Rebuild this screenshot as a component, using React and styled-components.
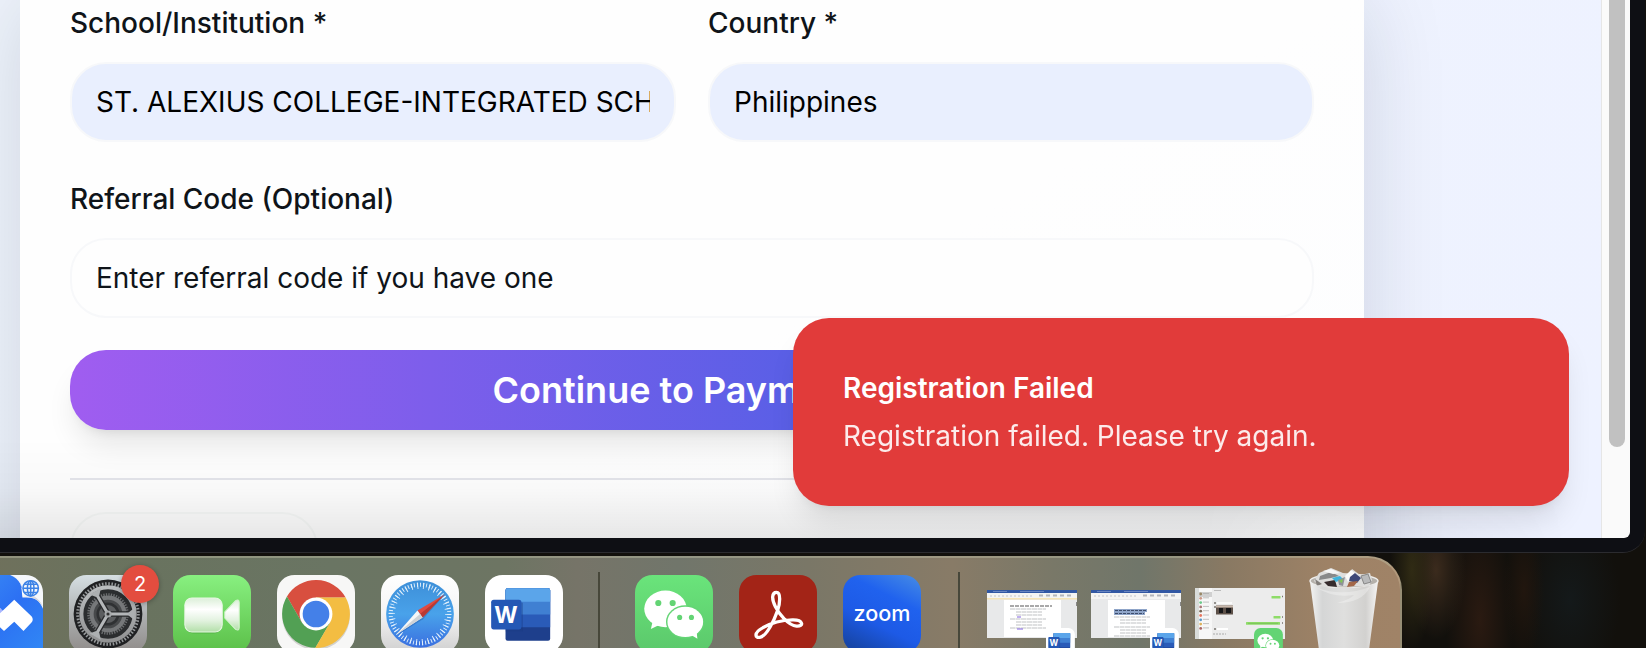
import React from 'react';
import styled, { createGlobalStyle } from 'styled-components';
import { ArrowRight } from 'lucide-react';

const GlobalStyle = createGlobalStyle`
  *, *::before, *::after { box-sizing: border-box; }
  body { margin: 0; font-family: Inter, "Liberation Sans", sans-serif; color: #0f1419; }
  button, input { font: inherit; color: inherit; }
`;

const Desktop = styled.div`
  display: flex;
  flex-direction: column;
  gap: 3px;
  height: 100vh;
  overflow: hidden;
  background:
    radial-gradient(ellipse 22px 80px at 1412px 570px, #302b14 0%, transparent 100%),
    radial-gradient(ellipse 30px 70px at 1436px 570px, #3b2b1d 0%, transparent 100%),
    radial-gradient(ellipse 34px 110px at 1480px 620px, #2a1a11 0%, transparent 100%),
    radial-gradient(ellipse 20px 70px at 1524px 590px, #21160e 0%, transparent 100%),
    radial-gradient(ellipse 50px 90px at 1570px 600px, #14191a 0%, transparent 100%),
    #12100c;
`;

const Window = styled.div`
  flex: 1;
  min-height: 0;
  margin-right: 1px;
  padding: 0 15px 14px 0;
  background: #0e0f14;
  border-bottom: 1px solid #2b2b2f;
  border-radius: 0 0 22px 0;
`;

const Viewport = styled.div`
  display: flex;
  height: 100%;
  overflow: hidden;
  background: #fafafa;
  border-radius: 0 0 6px 0;
`;

const Page = styled.main`
  position: relative;
  flex: 1;
  min-width: 0;
  overflow: hidden;
  background: linear-gradient(100deg, #eff4fc, #eef2ff);
`;

const ScrollTrack = styled.div`
  width: 29px;
  padding-left: 7px;
  border-left: 1px solid #e6e6e6;
`;

const ScrollThumb = styled.div`
  width: 16px;
  height: 83%;
  background: #c1c1c1;
  border-radius: 0 0 8px 8px;
`;

const Card = styled.form`
  display: flex;
  flex-direction: column;
  margin: 0 237px 0 20px;
  padding: 2px 50px 160px;
  background: linear-gradient(150deg, #fefefe 50%, #fcfdff);
  box-shadow: 0 0 80px rgba(10, 25, 50, 0.14);
`;

const FieldRow = styled.div`
  display: grid;
  grid-template-columns: 1fr 1fr;
  gap: 32px;
  margin-bottom: 36px;
`;

const Field = styled.div`
  display: flex;
  flex-direction: column;
  gap: 18px;
  min-width: 0;
`;

const Label = styled.label`
  font-size: 28px;
  font-weight: 500;
  line-height: 42px;
`;

const TextInput = styled.input`
  width: 100%;
  height: 80px;
  padding: 0 24px;
  border: 2px solid #f7f8fa;
  border-radius: 36px;
  background: ${(p) => (p.$filled ? '#e9effe' : '#fefefe')};
  color: ${(p) => (p.$filled ? '#000' : '#0f1419')};
  font-size: 28px;
  outline: none;
  &::placeholder { color: #0f1419; opacity: 1; }
`;

const SubmitButton = styled.button`
  display: flex;
  align-items: center;
  justify-content: center;
  gap: 8px;
  height: 80px;
  margin-top: 32px;
  border: 0;
  border-radius: 36px;
  background: linear-gradient(90deg, #a05df0, #5a5fe6 58%, #2563eb);
  color: #fff;
  font-size: 36px;
  font-weight: 600;
  box-shadow: 0 20px 30px -6px rgba(0, 0, 0, 0.1), 0 8px 12px -8px rgba(0, 0, 0, 0.1);
`;

const Separator = styled.hr`
  width: 100%;
  height: 2px;
  margin: 48px 0 32px;
  border: 0;
  background: #e4e5eb;
`;

const OutlineButton = styled.button`
  width: 248px;
  height: 80px;
  border: 2px solid #f7f9f8;
  border-radius: 36px;
  background: transparent;
`;

const BottomShade = styled.div`
  position: absolute;
  inset: auto 0 0 0;
  height: 100px;
  background: linear-gradient(transparent, rgba(0, 0, 0, 0.02) 50%, rgba(0, 0, 0, 0.09));
  mask-image: linear-gradient(90deg, #000 75%, transparent 98%);
  pointer-events: none;
`;

const Toast = styled.section`
  position: absolute;
  right: 32px;
  bottom: 32px;
  display: flex;
  flex-direction: column;
  gap: 8px;
  width: 776px;
  padding: 50px;
  border-radius: 36px;
  background: #e13b3a;
  color: #fff;
  box-shadow: 0 20px 30px -6px rgba(0, 0, 0, 0.1), 0 8px 12px -8px rgba(0, 0, 0, 0.1);
`;

const ToastTitle = styled.h2`
  margin: 0;
  font-size: 28px;
  font-weight: 600;
  line-height: 40px;
`;

const ToastText = styled.p`
  margin: 0;
  font-size: 28px;
  line-height: 40px;
  opacity: 0.9;
`;

const Dock = styled.nav`
  display: flex;
  align-self: flex-start;
  flex: none;
  height: 92px;
  margin-left: -44px;
  padding: 10px 21px 0 9px;
  border-top: 2px solid rgba(190, 190, 165, 0.45);
  border-right: 2px solid rgba(200, 180, 150, 0.45);
  border-radius: 0 34px 0 0;
  background: linear-gradient(90deg, #70705b 0, #69735f 13%, #6a7563 26%, #6d7563 38%, #767468 43%, #71766b 50%, #7a7767 59%, #887b67 69%, #797868 76%, #70766a 82%, #897963 88%, #9e8266 95%, #a08367);
`;

const AppGroup = styled.div`
  display: flex;
  gap: 26px;
  padding-top: 7px;
`;

const ThumbGroup = styled.div`
  display: flex;
  gap: 14px;
  padding-top: 20px;
  margin-right: 24px;
`;

const DockDivider = styled.div`
  width: 2px;
  margin: ${(p) => (p.$beforeWindows ? '4px 27px 0 37px' : '4px 35px 0')};
  background: #47473a;
`;

const DockItem = styled.button`
  position: relative;
  display: block;
  height: max-content;
  padding: 0;
  border: 0;
  background: none;
  svg { display: block; }
`;

const Badge = styled.span`
  position: absolute;
  top: -10px;
  right: -12px;
  width: 38px;
  height: 38px;
  border-radius: 50%;
  background: #e34d3f;
  color: #fff;
  font-size: 20px;
  line-height: 38px;
  text-align: center;
  box-shadow: 0 1px 5px rgba(0, 0, 0, 0.3);
`;

function Tile({ fill, children }) {
  return (
    <svg width="78" height="78" viewBox="0 0 76 76" aria-hidden="true">
      <rect width="76" height="76" rx="17" fill={fill} />
      {children}
    </svg>
  );
}

function Gradient({ id, stops, x2 = 0, y2 = 1 }) {
  return (
    <linearGradient id={id} x1="0" y1="0" x2={x2} y2={y2}>
      {stops.map((c, i) => (
        <stop key={i} offset={i / (stops.length - 1)} stopColor={c} />
      ))}
    </linearGradient>
  );
}

function MeetingIcon() {
  return (
    <Tile fill="#f5f7fb">
      <defs>
        <Gradient id="meet" stops={['#3b8df5', '#2c70f3', '#3188f5']} x2={1} />
        <Gradient id="fold" stops={['#b9bcc8', '#ffffff', '#c9ccd8']} x2={1} y2={0.6} />
      </defs>
      <path d="M17 0H44C54 4 56 12 58 21C67 21 73 25 76 33V76H0V17Q0 0 17 0Z" fill="url(#meet)" />
      <path d="M44 0C56 3 55 14 56 22C66 21 72 24 76 31C72 20 58 17 55 12C54 6 51 2 44 0Z" fill="url(#fold)" />
      <g fill="none" stroke="#3c82e6" strokeWidth="1.5">
        <circle cx="64" cy="13" r="7.5" />
        <ellipse cx="64" cy="13" rx="3.2" ry="7.5" />
        <path d="M64 5.500V20.500M56.500 13H71.500M58 9H70M58 17H70" />
      </g>
      <path d="M30 27L38 36L34 40Z" fill="#a7b5ff" />
      <path d="M48 24L65 40.500Q67 43.500 65 46L57 54.500L48 45.500L38 54.500L29 46V42Z" fill="#fff" />
    </Tile>
  );
}

function SettingsIcon() {
  return (
    <Tile fill="url(#set)">
      <defs>
        <Gradient id="set" stops={['#d6dfe3', '#aeb1b2', '#8f8b89']} />
        <Gradient id="gear" stops={['#b9bcbe', '#929394']} />
      </defs>
      <circle cx="38" cy="38" r="33.500" fill="#1f2022" />
      <circle cx="38" cy="38" r="29.500" fill="none" stroke="#96999b" strokeWidth="3" strokeDasharray="1.500 1.590" />
      <circle cx="38" cy="38" r="26" fill="#2b2d2f" stroke="url(#gear)" strokeWidth="4" />
      <circle cx="38" cy="38" r="19" fill="none" stroke="#6c6e70" strokeWidth="2.500" strokeDasharray="1.300 1.180" />
      <circle cx="38" cy="38" r="16" fill="#47494b" stroke="#76787a" strokeWidth="4" />
      <circle cx="38" cy="38" r="10" fill="#5b5d5f" stroke="#2f3133" strokeWidth="2.500" />
      <path d="M38 38H63M38 38L25.500 16.500M38 38L25.500 59.500" stroke="#2a2b2d" strokeWidth="5.500" />
      <path d="M38 38H63M38 38L25.500 16.500M38 38L25.500 59.500" stroke="#b4b7b9" strokeWidth="3" />
      <path d="M58 36.500L64 32V44L58 39.500ZM29.500 20L31 13L20 19L26.500 21.500ZM29.500 56L31 63L20 57L26.500 54.500Z" fill="#acafb1" />
      <circle cx="38" cy="38" r="3.500" fill="#a5a8aa" />
      <circle cx="38" cy="38" r="1.500" fill="#333" />
    </Tile>
  );
}

function VideoIcon() {
  return (
    <Tile fill="url(#ft)">
      <defs>
        <Gradient id="ft" stops={['#88f080', '#5bbf48']} />
        <Gradient id="cam" stops={['#dcefd9', '#ffffff', '#e2f2df', '#b3dfa9']} />
      </defs>
      <rect x="11" y="23" width="37.500" height="34" rx="9" fill="#3c9b30" opacity="0.45" />
      <rect x="11.500" y="22.500" width="36.500" height="33" rx="7" fill="url(#cam)" stroke="#e8f8e4" />
      <path d="M50.500 36L61 25Q64.500 23 64.500 27V51Q64.500 55 61 53L50.500 42Z" fill="url(#cam)" stroke="#d6f4d0" />
    </Tile>
  );
}

function ChromeIcon() {
  return (
    <Tile fill="#f7f7f6">
      <circle cx="38" cy="40" r="33" fill="#b9b9b5" opacity="0.6" />
      <path d="M9.700 21A33 33 0 0 1 66.900 22H38V38L24.100 46Z" fill="#d84f3f" />
      <path d="M9.700 21A33 33 0 0 0 37.400 71L51.900 46L38 38L24.100 46Z" fill="#52a054" />
      <path d="M66.900 22A33 33 0 0 1 37.400 71L51.900 46L38 38V22Z" fill="#f3bd42" />
      <circle cx="38" cy="38" r="16" fill="#fff" />
      <circle cx="38" cy="38" r="13" fill="#4480e8" />
    </Tile>
  );
}

function SafariIcon() {
  return (
    <Tile fill="url(#sfbg)">
      <defs>
        <Gradient id="sfbg" stops={['#ffffff', '#f4f4f4', '#cfcfcf']} />
        <Gradient id="sf" stops={['#3d8fd8', '#49a2ea', '#3a6fe0']} />
      </defs>
      <circle cx="38" cy="38" r="33" fill="url(#sf)" />
      <circle cx="38" cy="38" r="28.500" fill="none" stroke="#e4f1fc" strokeWidth="4" strokeDasharray="0.900 2.080" />
      <circle cx="38" cy="38" r="27.500" fill="none" stroke="#e4f1fc" strokeWidth="6" strokeDasharray="0.900 4.860" />
      <path d="M62 19L41 43L15 59Z" fill="#1f4f9c" opacity="0.35" />
      <path d="M62 19L35.500 34.500L40.500 41.500Z" fill="#df4b41" />
      <path d="M62 19L38 38L40.500 41.500Z" fill="#b83a34" />
      <path d="M15 58L35.500 34.500L40.500 41.500Z" fill="#f7f7f7" />
      <path d="M15 58L38 38L40.500 41.500Z" fill="#cfd2d6" />
    </Tile>
  );
}

function WordMark() {
  return (
    <>
      <rect x="20" y="13" width="43.500" height="51" rx="2" fill="#1e3f8c" />
      <path d="M20 51V15Q20 13 22 13H61.500Q63.500 13 63.500 15V51Z" fill="#2a5bb8" />
      <path d="M20 38.500V15Q20 13 22 13H61.500Q63.500 13 63.500 15V38.500Z" fill="#4080d2" />
      <path d="M20 26V15Q20 13 22 13H61.500Q63.500 13 63.500 15V26Z" fill="#5ba5ea" />
      <rect x="20" y="27" width="17" height="28" fill="#1b3a80" opacity="0.35" />
      <rect x="6" y="24" width="29.500" height="29" rx="2.500" fill="#2458b5" />
      <text x="20.500" y="46.500" fontSize="22" fontWeight="700" textAnchor="middle" fill="#fff">W</text>
    </>
  );
}

function WordIcon() {
  return (
    <Tile fill="#fff">
      <WordMark />
    </Tile>
  );
}

function ChatMark() {
  return (
    <>
      <ellipse cx="29.700" cy="33" rx="20.700" ry="17.800" fill="#fff" />
      <path d="M17 46L15.500 52.500L24 48.500Z" fill="#fff" />
      <circle cx="22.700" cy="27.300" r="3" fill="#63d474" />
      <circle cx="36.700" cy="27.300" r="3" fill="#63d474" />
      <ellipse cx="49" cy="45.700" rx="18.800" ry="16.200" fill="#63d474" />
      <ellipse cx="49" cy="45.700" rx="17.400" ry="14.800" fill="#fff" />
      <path d="M54 58L60.800 62.200L60 55Z" fill="#fff" />
      <circle cx="43.500" cy="41.300" r="2.500" fill="#63d474" />
      <circle cx="55" cy="41.300" r="2.500" fill="#63d474" />
    </>
  );
}

function ChatIcon() {
  return (
    <Tile fill="url(#wc)">
      <defs>
        <Gradient id="wc" stops={['#6ae47b', '#5bc86b']} />
      </defs>
      <ChatMark />
    </Tile>
  );
}

function AcrobatIcon() {
  return (
    <Tile fill="#a32417">
      <path
        d="M36.500 17C41 17 40 28 37.500 35C34 45 27 59 21 60.500C15 62 14.500 56 23 51.500C31 47 43 44 52 43.800C63 43.500 63.500 50.500 56 49.800C48 49 39 38 35.500 31C31.500 23 32 17 36.500 17Z"
        fill="none"
        stroke="#fff"
        strokeWidth="3.200"
      />
    </Tile>
  );
}

function ZoomIcon() {
  return (
    <Tile fill="url(#zm)">
      <defs>
        <linearGradient id="zm" x1="0.800" y1="0" x2="0.300" y2="1">
          <stop offset="0" stopColor="#3f84e6" />
          <stop offset="0.300" stopColor="#2062ee" />
          <stop offset="0.650" stopColor="#1d5ae6" />
          <stop offset="1" stopColor="#1746a8" />
        </linearGradient>
      </defs>
      <text x="38" y="45" fontSize="21" fontWeight="500" textAnchor="middle" fill="#fff">zoom</text>
    </Tile>
  );
}

function DocumentThumb({ highlighted }) {
  const rows = [23, 26, 29, 33, 36, 39, 42];
  return (
    <svg width="90" height="60" viewBox="0 0 90 60" aria-hidden="true">
      <rect y="2" width="90" height="48" fill="#e8e9ea" />
      <rect y="2" width="90" height="3.500" fill="#3258a3" />
      <path d="M6 3.500H20M33 3.500H57" stroke="#7f98cb" strokeWidth="0.700" />
      <rect y="5" width="90" height="6" fill="#f4f4f3" />
      <path d="M3 8H46" stroke="#c4c6ca" strokeWidth="1.200" strokeDasharray="2 2" />
      <path d="M52 7.500H84" stroke="#b4b6bb" strokeWidth="2" strokeDasharray="4 3" />
      {!highlighted && <rect y="10" width="90" height="1.500" fill="#f6e4b5" />}
      <rect x="17" y="12" width="57" height="37" fill="#fff" />
      {highlighted ? (
        <>
          <path d="M23 22.500H56M23 25.500H54" stroke="#8fa5c9" strokeWidth="3" />
          <path d="M24 22.500H55M24 25.500H53" stroke="#3d4d6c" strokeDasharray="3 1" />
        </>
      ) : (
        <path d="M23 18H65" stroke="#555" strokeWidth="1.200" strokeDasharray="4 1" />
      )}
      {rows.map((y, i) => (
        <path
          key={y}
          d={`M${i % 3 ? 29 : 23} ${y + (highlighted ? 6 : -2)}h${i % 3 ? 26 : 36}`}
          stroke="#a3a6ab"
          strokeWidth="0.700"
          strokeDasharray="5 0.5"
        />
      ))}
      {!highlighted && <path d="M30 29H34M30 41H36" stroke="#8060e0" />}
      <path d="M89.500 14V18" stroke="#888" />
      <g transform="translate(59 40) scale(.38)">
        <rect width="76" height="76" rx="17" fill="#fff" />
        <WordMark />
      </g>
    </svg>
  );
}

function ChatThumb() {
  const dots = ['#986', '#c98', '#6cc98a', '#a77', '#765', '#e77860', '#5997c9', '#ddb35c', '#a66'];
  return (
    <svg width="90" height="60" viewBox="0 0 90 60" aria-hidden="true">
      <rect width="90" height="51" fill="#ececec" />
      <rect width="4" height="51" fill="#d9dcda" />
      <rect x="4" width="13" height="51" fill="#f7f7f7" />
      <rect x="4" y="4" width="13" height="5" fill="#d0d0d0" />
      {dots.map((c, i) => (
        <g key={i}>
          <circle cx="5.700" cy={6 + i * 4.300} r="1.400" fill={c} />
          <path d={`M8 ${5.500 + i * 4.300}h6`} stroke="#aaa" strokeWidth="0.700" />
        </g>
      ))}
      <path d="M19 2.500H26" stroke="#bbb" />
      <rect x="76.500" y="8" width="9" height="2.500" rx="0.500" fill="#8edc68" />
      <rect x="78.500" y="28" width="7" height="2.500" rx="0.500" fill="#8edc68" />
      <rect x="51" y="34" width="34" height="2.800" rx="0.500" fill="#8edc68" />
      <path d="M53 35.400H83" stroke="#6fb552" strokeWidth="0.600" />
      <rect x="22" y="14" width="15" height="2" fill="#fafafa" />
      <rect x="21" y="17.500" width="17" height="9" fill="#5d5048" />
      <path d="M21 18.500H38" stroke="#c9b9ad" strokeWidth="2" />
      <path d="M24 22.500H28M31 22.500H36" stroke="#171719" strokeWidth="5" />
      <path d="M19 15H21M19 19H21M19 41H21M87 8.500H88M87 29H88M87 35H88" stroke="#77736e" strokeWidth="1.500" />
      <rect x="22" y="40" width="11" height="2" fill="#fff" />
      <path d="M18 46H31" stroke="#aaa" strokeWidth="1.200" strokeDasharray="2 1" />
      <g transform="translate(59 40) scale(.38)">
        <rect width="76" height="76" rx="17" fill="#63d474" />
        <ChatMark />
      </g>
    </svg>
  );
}

function TrashIcon() {
  return (
    <svg width="70" height="82" viewBox="0 0 70 82" aria-hidden="true">
      <defs>
        <linearGradient id="bin" x1="0" x2="1">
          <stop offset="0" stopColor="#f3f3f2" />
          <stop offset="0.180" stopColor="#d5d6d6" />
          <stop offset="0.500" stopColor="#dfdfde" />
          <stop offset="0.820" stopColor="#d2d1cf" />
          <stop offset="1" stopColor="#f5f4f3" />
        </linearGradient>
      </defs>
      <ellipse cx="35" cy="13" rx="34" ry="7" fill="#b5b1ab" stroke="#efeeec" strokeWidth="1.500" />
      <path d="M5 13L10 5L22 0L34 5L39 8L43 1L51 7L61 5L63 12L60 18L12 19Z" fill="#dededd" />
      <path d="M11 8L22 4L30 8L22 10L10 12Z" fill="#88898a" />
      <path d="M14 3L22 1L31 5L24 6Z" fill="#f6f6f6" />
      <path d="M15 14L26 12L28 19L19 18Z" fill="#352b2d" />
      <path d="M23 10L31 8L34 11L27 14Z" fill="#3fb4dc" />
      <path d="M29 12L36 9L34 18L30 17Z" fill="#8f9298" />
      <path d="M30 13L34 11L33 15Z" fill="#7fc653" />
      <path d="M36 8L42 2L50 8L44 7L39 14Z" fill="#fafafa" />
      <path d="M41 9L46 5L52 10L48 15L40 13Z" fill="#3d4878" />
      <path d="M40 14L49 13L45 18L38 19Z" fill="#a36749" />
      <path d="M52 8L59 6L62 14L55 16Z" fill="#b9babb" stroke="#888" />
      <path d="M6 11L13 16L8 18Z" fill="#827e7a" />
      <path d="M1 14Q10 20 35 20T69 14L60 82H10Z" fill="url(#bin)" />
      <path d="M8 20Q34 29 61 19Q53 35 28 35Q42 31 45 27Q24 30 8 20Z" fill="#fff" opacity="0.300" />
    </svg>
  );
}

const mainApps = [
  { name: 'Meeting', Icon: MeetingIcon },
  { name: 'System Settings', Icon: SettingsIcon, badge: 2 },
  { name: 'FaceTime', Icon: VideoIcon },
  { name: 'Chrome', Icon: ChromeIcon },
  { name: 'Safari', Icon: SafariIcon },
  { name: 'Word', Icon: WordIcon },
];

const recentApps = [
  { name: 'WeChat', Icon: ChatIcon },
  { name: 'Acrobat', Icon: AcrobatIcon },
  { name: 'Zoom', Icon: ZoomIcon },
];

function Apps({ items }) {
  return (
    <AppGroup>
      {items.map(({ name, Icon, badge }) => (
        <DockItem key={name} type="button" aria-label={name}>
          <Icon />
          {badge && <Badge>{badge}</Badge>}
        </DockItem>
      ))}
    </AppGroup>
  );
}

function RegistrationForm() {
  return (
    <Card onSubmit={(e) => e.preventDefault()}>
      <FieldRow>
        <Field>
          <Label htmlFor="school">School/Institution *</Label>
          <TextInput id="school" $filled defaultValue="ST. ALEXIUS COLLEGE-INTEGRATED SCHOOL" />
        </Field>
        <Field>
          <Label htmlFor="country">Country *</Label>
          <TextInput id="country" $filled defaultValue="Philippines" />
        </Field>
      </FieldRow>
      <Field>
        <Label htmlFor="referral">Referral Code (Optional)</Label>
        <TextInput id="referral" placeholder="Enter referral code if you have one" />
      </Field>
      <SubmitButton type="submit">
        Continue to Payment
        <ArrowRight size={28} aria-hidden="true" />
      </SubmitButton>
      <Separator />
      <OutlineButton type="button" aria-label="Back" />
    </Card>
  );
}

export default function App() {
  return (
    <>
      <GlobalStyle />
      <Desktop>
        <Window>
          <Viewport>
            <Page>
              <RegistrationForm />
              <BottomShade />
              <Toast role="alert">
                <ToastTitle>Registration Failed</ToastTitle>
                <ToastText>Registration failed. Please try again.</ToastText>
              </Toast>
            </Page>
            <ScrollTrack>
              <ScrollThumb />
            </ScrollTrack>
          </Viewport>
        </Window>
        <Dock aria-label="Dock">
          <Apps items={mainApps} />
          <DockDivider />
          <Apps items={recentApps} />
          <DockDivider $beforeWindows />
          <ThumbGroup>
            <DockItem type="button" aria-label="Document window"><DocumentThumb /></DockItem>
            <DockItem type="button" aria-label="Second document window"><DocumentThumb highlighted /></DockItem>
            <DockItem type="button" aria-label="Chat window"><ChatThumb /></DockItem>
          </ThumbGroup>
          <DockItem type="button" aria-label="Trash"><TrashIcon /></DockItem>
        </Dock>
      </Desktop>
    </>
  );
}
